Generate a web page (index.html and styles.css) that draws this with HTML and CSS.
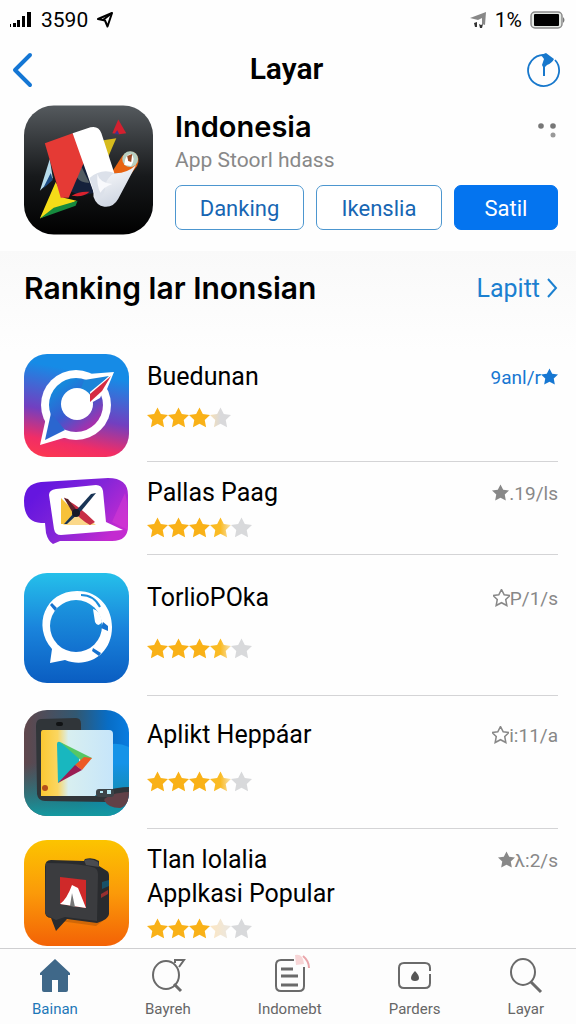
FILE: index.html
```html
<!DOCTYPE html>
<html lang="id">
<head>
    <meta charset="UTF-8">
    <meta name="viewport" content="width=device-width, initial-scale=1.0">
    <title>Layar - Indonesia</title>
    <link rel="stylesheet" href="styles.css">
</head>
<body>
    <!-- shared star shape -->
    <svg class="defs" aria-hidden="true">
        <defs>
            <linearGradient id="mostly"><stop offset="0.5" stop-color="#fabb24"/><stop offset="1" stop-color="#f7e3b4"/></linearGradient>
            <linearGradient id="quarter"><stop offset="0.1" stop-color="#f3dfba"/><stop offset="0.5" stop-color="#d9d9db"/></linearGradient>
            <linearGradient id="faint"><stop offset="0.1" stop-color="#fbe6c4"/><stop offset="1" stop-color="#e9e7e3"/></linearGradient>
            <symbol id="star" viewBox="0 0 22 22">
                <path d="M11 0l3.500 6.800 7.500 1-5.500 5.200 1.400 7.700-6.900-3.600-6.900 3.600 1.400-7.700L0 7.800l7.500-1z"/>
            </symbol>
        </defs>
    </svg>

    <div class="status-bar">
        <div class="status-group">
            <svg width="23" height="18" viewBox="0 0 23 18"><path d="M0 13h1v3H0zM3 12h3v4H3zM7 9h3v7H7zM12 5h3v11h-3zM17 1h4v15h-4z"/></svg>
            <span>3590</span>
            <svg width="18" height="18" viewBox="0 0 18 18" fill="none" stroke="#000" stroke-width="2" stroke-linejoin="round"><path d="M16 2L2 8l7 1.500 2.500 6z"/><path d="M16 2L7 9"/></svg>
        </div>
        <div class="status-group">
            <svg width="18" height="18" viewBox="0 0 18 18"><path d="M1 7L17 1l-1 13-3-1V7L9 9z" fill="#888"/><path d="M5 12l3-1v5H6zM10 13l2 1 2-1-1 4h-2z" fill="#333"/></svg>
            <span>1%</span>
            <svg width="36" height="20" viewBox="0 0 36 20"><rect x="1" y="2" width="31" height="16" rx="4" fill="#e4e8e4" stroke="#8a8a8a" stroke-width="1.500"/><rect x="4" y="4" width="25" height="12" rx="1"/><path d="M33 7q3 3 0 6z" fill="#777"/></svg>
        </div>
    </div>

    <header class="nav">
        <button class="icon-btn" aria-label="Kembali">
            <svg width="22" height="36" viewBox="0 0 22 36" fill="none" stroke="#1476d4" stroke-width="4" stroke-linecap="round" stroke-linejoin="round"><path d="M18 3L3 18l15 15"/></svg>
        </button>
        <h1>Layar</h1>
        <button class="icon-btn" aria-label="Aktivitas">
            <svg width="34" height="34" viewBox="0 0 34 34"><path d="M28 7a15.500 15.500 0 1 1-11-5" fill="none" stroke="#1878cc" stroke-width="1.800"/><path d="M14 2l5-2 8 6q-2 4-7 6l-2 2v9h-2V14l-1-2 2-6z" fill="#1878cc"/></svg>
        </button>
    </header>

    <section class="app">
        <svg class="app-logo" viewBox="0 0 130 130">
            <defs>
                <linearGradient id="dark" x2="0" y2="1"><stop offset="0" stop-color="#555a5e"/><stop offset="0.55" stop-color="#17191b"/><stop offset="1" stop-color="#000"/></linearGradient>
                <linearGradient id="paper" x2="0.4" y2="1"><stop offset="0" stop-color="#fff"/><stop offset="1" stop-color="#cfd6e2"/></linearGradient>
            </defs>
            <rect width="130" height="130" rx="30" fill="url(#dark)"/>
            <path d="M26 54L16 86l13-13z" fill="#b7dcec"/>
            <path d="M27 68l-8 16 10-9z" fill="#1b4a82"/>
            <path d="M54 60h10l7 28-13 3-13-5z" fill="#14203a"/>
            <path d="M58 62l8 16q-9 0-13-6z" fill="#525c62"/>
            <path d="M95 14l8 14-7 1-7-1z" fill="#d3202f"/>
            <path d="M91 29l3-4 2 4z" fill="#40348a"/>
            <path d="M80 35l13-2-10 23z" fill="#d6bb1d"/>
            <path d="M32 77L16 114l37-18-13-3z" fill="#f4dc18"/>
            <path d="M16 114l36-13 2-5-24 7z" fill="#168a3e"/>
            <path d="M48 91q8-5 18-4-6 6-18 4z" fill="#d8222d"/>
            <path d="M21 38l28-10 12 28-16 37h-8z" fill="#e53a35"/>
            <path d="M88 68l11-17q5-6 12-4 7 5 3 14l-7 9z" fill="#e86311"/>
            <ellipse cx="107" cy="54" rx="8" ry="8" fill="#b7cfc2"/>
            <path d="M101 60q1-11 7-11 5 4 0 12z" fill="#fff"/>
            <path d="M104 51l5-2-1 8-3-1z" fill="#9b4a24"/>
            <path d="M88 68q14 2 25-8L95 94q-5 9-14 8-8-1-11-10V72z" fill="url(#paper)"/>
            <path d="M49 28l18-6q8-2 11 6l13 40-9 8-11 14z" fill="#fff"/>
            <path d="M66 73q12-10 25-5-8 6-9 12 0 12-8 14-2-2-3-5z" fill="#dce1ea"/>
            <path d="M74 69q2 9 15 10-9 3-12 9-4-8-3-19z" fill="#f8f9fc"/>
        </svg>
        <div class="app-info">
            <div class="app-heading">
                <div>
                    <h2>Indonesia</h2>
                    <p>App Stoorl hdass</p>
                </div>
                <button class="icon-btn more" aria-label="Lainnya">
                    <svg width="20" height="18" viewBox="0 0 20 18" fill="#777"><circle cx="3" cy="4" r="2.800"/><circle cx="15" cy="4" r="2.800"/><circle cx="15" cy="13" r="2.500" fill="#999"/></svg>
                </button>
            </div>
            <div class="actions">
                <button class="btn">Danking</button>
                <button class="btn">Ikenslia</button>
                <button class="btn btn-primary">Satil</button>
            </div>
        </div>
    </section>

    <main class="ranking">
        <div class="section-head">
            <h2>Ranking lar Inonsian</h2>
            <a href="#">Lapitt
                <svg width="12" height="22" viewBox="0 0 12 22" fill="none" stroke="#1b80d0" stroke-width="2"><path d="M2 2l8 9-8 9"/></svg>
            </a>
        </div>

        <ul class="list">
            <li class="row">
                <svg class="thumb" viewBox="0 0 105 103">
                    <defs>
                        <linearGradient id="sunset" x1="0.2" x2="0" y2="1"><stop offset="0.1" stop-color="#168be6"/><stop offset="0.52" stop-color="#723fc0"/><stop offset="0.8" stop-color="#f12d66"/><stop offset="1" stop-color="#ff3a4c"/></linearGradient>
                        <linearGradient id="ring" x2="0.7" y2="1"><stop offset="0.2" stop-color="#1688dc"/><stop offset="0.6" stop-color="#375bd0"/><stop offset="1" stop-color="#b32ba8"/></linearGradient>
                    </defs>
                    <rect width="105" height="103" rx="23" fill="url(#sunset)"/>
                    <circle cx="52" cy="51" r="35" fill="#fff"/>
                    <path d="M16 91l7-32 20 24zM64 20l26-2-9 22z" fill="#fff"/>
                    <circle cx="52" cy="51" r="27" fill="url(#ring)"/>
                    <path d="M21 86l6-27 14 17z" fill="#2b66cf"/>
                    <path d="M60 26l25-4-20 20-9-5z" fill="#1c84d8"/>
                    <path d="M66 38l22-18-12 24-9 5z" fill="#fff"/>
                    <circle cx="53" cy="50" r="16" fill="#fff"/>
                    <path d="M66 48v-8l21-18-9 15z" fill="#d52b43"/>
                </svg>
                <div class="row-body">
                    <div>
                        <h3>Buedunan</h3>
                        <div class="stars" role="img" aria-label="3,5 bintang">
                            <svg><use href="#star"/></svg><svg><use href="#star"/></svg><svg><use href="#star"/></svg><svg fill="url(#quarter)"><use href="#star"/></svg>
                        </div>
                    </div>
                    <span class="score score-active">9anl/r<svg><use href="#star"/></svg></span>
                </div>
            </li>

            <li class="row row-compact">
                <svg class="thumb" viewBox="0 0 105 66">
                    <defs>
                        <linearGradient id="violet" x2="1" y2="0.6"><stop offset="0.2" stop-color="#6516df"/><stop offset="0.6" stop-color="#8425d8"/><stop offset="1" stop-color="#c32bd0"/></linearGradient>
                    </defs>
                    <path d="M17 4L84 0q20 0 20 17v31q0 15-16 15H36l-7 3q-5-3-7-11l-1-10h-4Q0 44 0 23 0 6 17 4z" fill="url(#violet)"/>
                    <path d="M101 15L88 44l16 8-1-28z" fill="#d83bd4" opacity=".5"/>
                    <path d="M32 11l40-4q6 0 7 6l3 31 17 8-62 5q-6 0-7-6l-5-34q0-5 7-6z" fill="#fff"/>
                    <path d="M37 20l27 27-27-1z" fill="#f7c13a"/>
                    <path d="M39 47l14-15 19 15z" fill="#fbd88a"/>
                    <path d="M43 22q12 6 28 22l-5 3Q51 39 40 19z" fill="#c82f46"/>
                    <path d="M40 46l27-30 5-1-14 17-15 14z" fill="#183455"/>
                    <path d="M40 20l4 1 11 14-5 2z" fill="#5b222c"/>
                    <circle cx="52" cy="35" r="4" fill="#171928"/>
                </svg>
                <div class="row-body">
                    <div>
                        <h3>Pallas Paag</h3>
                        <div class="stars" role="img" aria-label="3,5 bintang">
                            <svg><use href="#star"/></svg><svg><use href="#star"/></svg><svg><use href="#star"/></svg><svg fill="url(#mostly)"><use href="#star"/></svg><svg class="off"><use href="#star"/></svg>
                        </div>
                    </div>
                    <span class="score"><svg><use href="#star"/></svg>.19/ls</span>
                </div>
            </li>

            <li class="row row-tall">
                <svg class="thumb" viewBox="0 0 105 110">
                    <defs>
                        <linearGradient id="sky" x2="0" y2="1"><stop offset="0" stop-color="#25c0ea"/><stop offset="0.5" stop-color="#1a84dc"/><stop offset="1" stop-color="#0a5dc1"/></linearGradient>
                        <linearGradient id="lens" x2="0" y2="1"><stop offset="0" stop-color="#1c97df"/><stop offset="1" stop-color="#1270cf"/></linearGradient>
                    </defs>
                    <rect width="105" height="110" rx="23" fill="url(#sky)"/>
                    <path d="M26 90l2-14C8 53 21 18 53 18c24 0 35 19 35 36 0 28-25 42-47 33z" fill="#fff"/>
                    <circle cx="52" cy="53" r="26" fill="url(#lens)"/>
                    <path d="M57 22q13 0 19 12" fill="none" stroke="#1b8ddc" stroke-width="2"/>
                    <path d="M69 36q7 1 9 13-4 6-7 0z" fill="#fff"/>
                    <path d="M79 49l5 4v5l-7-3zM28 30l5 5-2 3-5-6zM69 75l8 5-2 3-7-5z" fill="#1672cf"/>
                </svg>
                <div class="row-body">
                    <div>
                        <h3>TorlioPOka</h3>
                        <div class="stars" role="img" aria-label="3,5 bintang">
                            <svg><use href="#star"/></svg><svg><use href="#star"/></svg><svg><use href="#star"/></svg><svg fill="url(#mostly)"><use href="#star"/></svg><svg class="off"><use href="#star"/></svg>
                        </div>
                    </div>
                    <span class="score"><svg class="outline"><use href="#star"/></svg>P/1/s</span>
                </div>
            </li>

            <li class="row row-medium">
                <svg class="thumb" viewBox="0 0 105 106">
                    <defs>
                        <linearGradient id="scene" x2="1"><stop offset="0" stop-color="#60474c"/><stop offset="0.5" stop-color="#315872"/><stop offset="0.8" stop-color="#086dc5"/><stop offset="1" stop-color="#087ce0"/></linearGradient>
                        <linearGradient id="floor" x2="0" y2="1"><stop offset="0.5" stop-color="#127e8a" stop-opacity="0"/><stop offset="1" stop-color="#1499a0"/></linearGradient>
                        <linearGradient id="screen" x2="1"><stop offset="0" stop-color="#fbc832"/><stop offset="0.23" stop-color="#fbd660"/><stop offset="0.38" stop-color="#d8eff0"/><stop offset="1" stop-color="#c6e5fa"/></linearGradient>
                    </defs>
                    <rect width="105" height="106" rx="23" fill="url(#scene)"/>
                    <path d="M88 34q8-1 17 3v44H88z" fill="#1593e8"/>
                    <rect width="105" height="106" rx="23" fill="url(#floor)"/>
                    <path d="M17 9l35-1q5 0 5 6v72h18q5-8 30-9v6q-17 1-22 9l-62-1q-7 0-8-7l-1-68q0-7 5-7z" fill="#303539"/>
                    <path d="M80 90q5-7 25-8 0 14-9 16-12 0-16-8z" fill="#614047"/>
                    <path d="M19 20h66q4 0 4 4v55q-14 0-18 7H17V23q0-3 2-3z" fill="url(#screen)"/>
                    <path d="M33 34q0-3 3-2l19 12v11L34 73z" fill="#18b7bf"/>
                    <path d="M36 32l32 16-8 5z" fill="#56c765"/>
                    <path d="M68 48L58 60l-7-5 9-8z" fill="#ed5a24"/>
                    <path d="M34 73l17-18 7 5z" fill="#9a1d53"/>
                    <circle cx="21" cy="78" r="3" fill="#b54f19"/>
                    <rect x="72" y="79" width="18" height="8" rx="3" fill="#3d4449"/>
                    <path d="M76 81h3v2h-3zM83 80h4v4h-4z" fill="#b6e9f7"/>
                    <rect x="32" y="12" width="7" height="4" rx="2" fill="#101214"/>
                </svg>
                <div class="row-body">
                    <div>
                        <h3>Aplikt Heppáar</h3>
                        <div class="stars" role="img" aria-label="3,5 bintang">
                            <svg><use href="#star"/></svg><svg><use href="#star"/></svg><svg><use href="#star"/></svg><svg fill="url(#mostly)"><use href="#star"/></svg><svg class="off"><use href="#star"/></svg>
                        </div>
                    </div>
                    <span class="score"><svg class="outline"><use href="#star"/></svg>i:11/a</span>
                </div>
            </li>

            <li class="row row-last">
                <svg class="thumb" viewBox="0 0 105 106">
                    <defs>
                        <linearGradient id="amber" x2="0" y2="1"><stop offset="0" stop-color="#fcc400"/><stop offset="0.5" stop-color="#fb9a09"/><stop offset="1" stop-color="#f36206"/></linearGradient>
                    </defs>
                    <rect width="105" height="106" rx="23" fill="url(#amber)"/>
                    <path d="M36 81l36 5 12-9-6-3z" fill="#b65a08" opacity=".6"/>
                    <path d="M27 20l33 1 1-2q8-2 14 2v5l8 5q2 1 2 5v38q0 5-12 9l-30-4-11 12-5-13q-6 0-6-7V27q0-7 6-7z" fill="#292b2e"/>
                    <path d="M22 23q30 0 46 4 6 1 6 7l-1 47-32-4-9 3-6-3q-5-1-5-6z" fill="#3b3c3f"/>
                    <path d="M60 20q8-2 14 2l1 5-13-2z" fill="#4b4c50"/>
                    <path d="M78 42l7-2v6l-7 3z" fill="#175067"/><path d="M77 54l7-4v4l-7 4z" fill="#96302f"/>
                    <path d="M36 37l26 3v28l-26-4z" fill="#cf2929"/>
                    <path d="M36 64q7-5 12-19l6 3 8 20z" fill="#fff"/>
                    <path d="M48 53l-2 13 5 1z" fill="#777"/>
                </svg>
                <div class="row-body">
                    <div>
                        <h3>Tlan lolalia<br>Applkasi Popular</h3>
                        <div class="stars" role="img" aria-label="3 bintang">
                            <svg><use href="#star"/></svg><svg><use href="#star"/></svg><svg><use href="#star"/></svg><svg fill="url(#faint)"><use href="#star"/></svg><svg class="off"><use href="#star"/></svg>
                        </div>
                    </div>
                    <span class="score"><svg><use href="#star"/></svg>λ:2/s</span>
                </div>
            </li>
        </ul>
    </main>

    <nav class="tabs">
        <a href="#" class="active">
            <svg viewBox="0 0 36 36"><path d="M18 2L3 16v2h2v15q0 2 2 2h8V23h6v12h8q2 0 2-2V18h2v-2z" fill="#3f6889"/></svg>
            Bainan
        </a>
        <a href="#">
            <svg viewBox="0 0 36 36"><ellipse cx="16" cy="18" rx="13" ry="14"/><path d="M24 27l7 7" stroke-width="3"/><path d="M25 3h9l-5 7M25 2v4"/></svg>
            Bayreh
        </a>
        <a href="#">
            <svg viewBox="0 0 36 36"><path d="M22 3H9Q4 3 4 8v21q0 5 5 5h18q5 0 5-5V10"/><path d="M9 12h12M9 19h17M9 28h17" stroke-width="3"/><path d="M23-2q8-2 9 9l-8 1z" fill="#f7d5d6" stroke="none"/><path d="M31-1q6 5 6 12" stroke="#e9a5aa"/></svg>
            Indomebt
        </a>
        <a href="#">
            <svg viewBox="0 0 36 36"><path d="M33 14V11q0-5-5-5H7Q2 6 2 11v15q0 5 5 5h21q5 0 5-5v-9"/><path d="M18 14q-4 4-4 7t4 3 4-3-4-7z" fill="#555" stroke="none"/></svg>
            Parders
        </a>
        <a href="#">
            <svg viewBox="0 0 36 36"><ellipse cx="15" cy="15" rx="12" ry="13"/><path d="M23 25l10 10" stroke-width="3"/></svg>
            Layar
        </a>
    </nav>
</body>
</html>
```

FILE: styles.css
```css
* { margin: 0; padding: 0; box-sizing: border-box; }
body {
    font-family: Roboto, 'Liberation Sans', sans-serif;
    background: #fefefe;
    color: #000;
    min-height: 100vh;
    display: flex;
    flex-direction: column;
}
button { font: inherit; cursor: pointer; }
a { text-decoration: none; }
.defs { position: absolute; width: 0; height: 0; }
.icon-btn { display: flex; background: none; border: none; }

/* Status bar */
.status-bar {
    display: flex;
    justify-content: space-between;
    align-items: center;
    height: 40px;
    padding: 0 10px;
    font-size: 21px;
}
.status-group { display: flex; align-items: center; gap: 8px; }

/* Title bar */
.nav {
    display: grid;
    grid-template-columns: 1fr auto 1fr;
    align-items: center;
    height: 60px;
    padding: 0 15px 0 12px;
}
.nav h1 { font-size: 30px; line-height: 36px; font-weight: 600; padding-bottom: 2px; }
.nav .icon-btn:last-child { justify-self: end; }

/* App header */
.app {
    display: flex;
    gap: 22px;
    padding: 5px 18px 16px 24px;
}
.app-logo { width: 129px; height: 130px; flex: none; }
.app-info { flex: 1; }
.app-heading { display: flex; justify-content: space-between; height: 80px; }
.app-heading h2 {
    font-family: Inter, sans-serif;
    font-size: 29px;
    line-height: 36px;
    font-weight: 600;
    padding-top: 4px;
}
.app-heading p { font-size: 21px; line-height: 30px; color: #888; }
.more { padding-top: 17px; height: 36px; }
.actions { display: grid; grid-template-columns: 129fr 126fr 104fr; gap: 12px; }
.btn {
    height: 45px;
    padding-top: 2px;
    font-size: 22px;
    color: #1766b3;
    background: #fff;
    border: 1px solid #4c96cf;
    border-radius: 7px;
}
.btn-primary { background: #0474ef; border-color: #0474ef; color: #fff; }

/* Ranking list */
.ranking {
    flex: 1;
    padding: 0 18px 0 24px;
    background: linear-gradient(#f9f9f9, #fefefe 100px);
}
.section-head {
    display: flex;
    justify-content: space-between;
    align-items: center;
    height: 74px;
    margin-bottom: 29px;
}
.section-head h2 { font-family: Inter, sans-serif; font-size: 30px; font-weight: 600; }
.section-head a { display: flex; align-items: center; gap: 6px; color: #1b80d0; font-size: 25px; }
.list { list-style: none; }
.row { display: flex; align-items: flex-start; gap: 18px; height: 108px; }
.row-compact { height: 93px; }
.row-tall { height: 141px; }
.row-medium { height: 133px; }
.row-last { height: 118px; }
.thumb { width: 105px; flex: none; }
.row-compact .thumb { margin-top: 16px; }
.row-tall .thumb { margin-top: 18px; }
.row-medium .thumb { margin-top: 14px; }
.row-last .thumb { margin-top: 11px; }
.row-body {
    flex: 1;
    align-self: stretch;
    display: flex;
    justify-content: space-between;
    padding-top: 6px;
    border-bottom: 1px solid #d4d4d6;
}
.row-compact .row-body, .row-last .row-body { padding-top: 14px; }
.row-tall .row-body { padding-top: 26px; }
.row-medium .row-body { padding-top: 22px; }
.row-last .row-body { border-bottom: none; }
.row h3 { font-size: 25px; line-height: 34px; font-weight: 400; }
.stars { display: flex; margin-top: 12px; fill: #f9b117; }
.stars svg { width: 21px; height: 24px; }
.stars .off { fill: #d8d9db; }
.row-compact .stars, .row-last .stars { margin-top: 6px; }
.row-tall .stars { margin-top: 22px; }
.row-medium .stars { margin-top: 18px; }
.score {
    display: flex;
    align-items: center;
    height: 34px;
    font-size: 19px;
    color: #888;
    fill: #888;
}
.score svg { width: 17px; height: 18px; }
.score .outline { fill: #fff; stroke: #888; stroke-width: 2px; overflow: visible; }
.score-active { color: #1677d2; fill: #1677d2; }

/* Bottom tabs */
.tabs {
    position: sticky;
    bottom: 0;
    display: flex;
    justify-content: space-between;
    height: 76px;
    padding: 8px 32px 0;
    background: #fdfdfd;
    border-top: 1px solid #cfcfd1;
}
.tabs a {
    display: flex;
    flex-direction: column;
    align-items: center;
    gap: 4px;
    font-size: 15px;
    line-height: 24px;
    color: #666;
}
.tabs svg { width: 36px; height: 36px; fill: none; stroke: #6a6a6a; stroke-width: 2; overflow: visible; }
.tabs .active { color: #1d78b8; }
.tabs .active svg { stroke: none; }
```
